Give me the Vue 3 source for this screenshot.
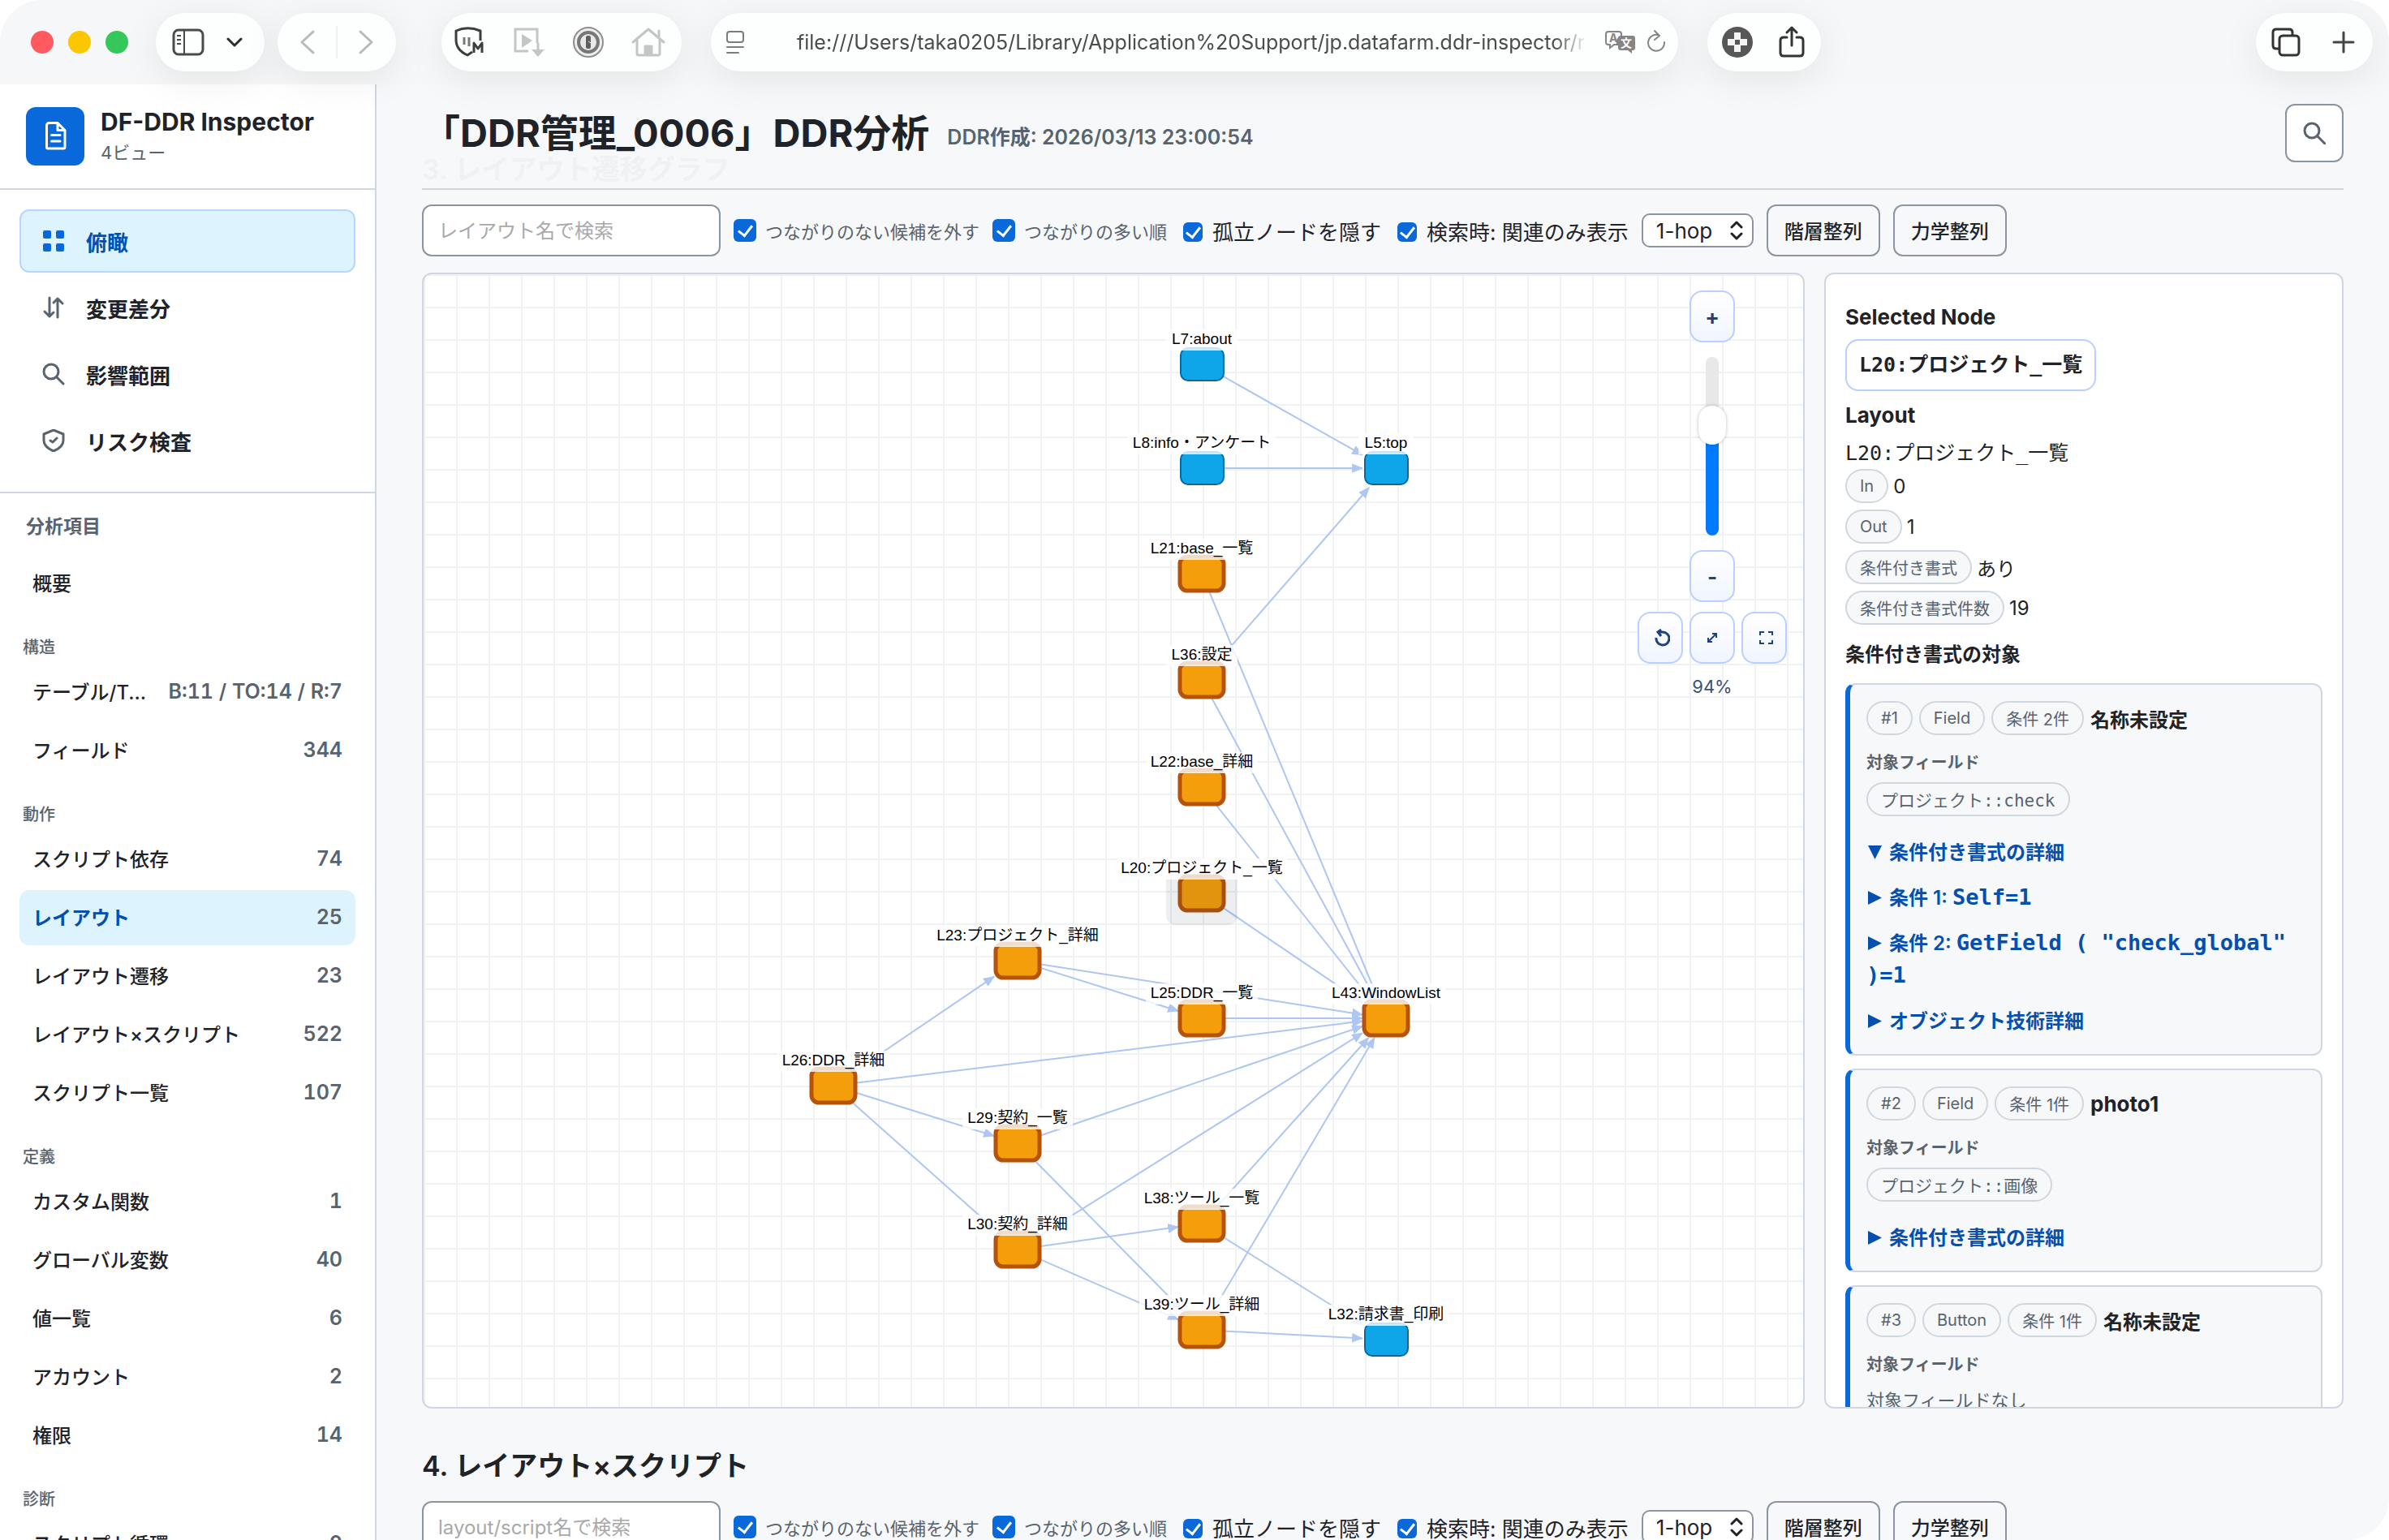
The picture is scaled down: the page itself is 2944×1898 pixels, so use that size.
<script setup>
import { ref } from "vue";

const url = ref(
  "file:///Users/taka0205/Library/Application%20Support/jp.datafarm.ddr-inspector/r"
);
const zoom = ref(65);

const views = [
  { label: "俯瞰", icon: "grid", active: true },
  { label: "変更差分", icon: "diff" },
  { label: "影響範囲", icon: "search" },
  { label: "リスク検査", icon: "shield" },
];

const groups = [
  { title: "", items: [{ label: "概要", count: "" }] },
  {
    title: "構造",
    items: [
      { label: "テーブル/T...", count: "B:11 / TO:14 / R:7" },
      { label: "フィールド", count: "344" },
    ],
  },
  {
    title: "動作",
    items: [
      { label: "スクリプト依存", count: "74" },
      { label: "レイアウト", count: "25", active: true },
      { label: "レイアウト遷移", count: "23" },
      { label: "レイアウト×スクリプト", count: "522" },
      { label: "スクリプト一覧", count: "107" },
    ],
  },
  {
    title: "定義",
    items: [
      { label: "カスタム関数", count: "1" },
      { label: "グローバル変数", count: "40" },
      { label: "値一覧", count: "6" },
      { label: "アカウント", count: "2" },
      { label: "権限", count: "14" },
    ],
  },
  { title: "診断", items: [{ label: "スクリプト循環", count: "0" }] },
];

const filters = [
  { label: "つながりのない候補を外す", muted: true },
  { label: "つながりの多い順", muted: true },
  { label: "孤立ノードを隠す" },
  { label: "検索時: 関連のみ表示" },
];

// node centres on the graph canvas
const nodes = [
  { id: "L7", name: "about", x: 959, y: 111, plain: true, lw: 74 },
  { id: "L8", name: "info・アンケート", x: 959, y: 239, plain: true, lw: 168 },
  { id: "L5", name: "top", x: 1186, y: 239, plain: true, lw: 54 },
  { id: "L21", name: "base_一覧", x: 959, y: 369, lw: 124 },
  { id: "L36", name: "設定", x: 959, y: 500, lw: 74 },
  { id: "L22", name: "base_詳細", x: 959, y: 632, lw: 124 },
  { id: "L20", name: "プロジェクト_一覧", x: 959, y: 763, lw: 196, selected: true },
  { id: "L23", name: "プロジェクト_詳細", x: 732, y: 846, lw: 196 },
  { id: "L25", name: "DDR_一覧", x: 959, y: 917, lw: 124 },
  { id: "L43", name: "WindowList", x: 1186, y: 917, lw: 134 },
  { id: "L26", name: "DDR_詳細", x: 505, y: 1000, lw: 124 },
  { id: "L29", name: "契約_一覧", x: 732, y: 1071, lw: 122 },
  { id: "L30", name: "契約_詳細", x: 732, y: 1202, lw: 122 },
  { id: "L38", name: "ツール_一覧", x: 959, y: 1170, lw: 140 },
  { id: "L39", name: "ツール_詳細", x: 959, y: 1301, lw: 140 },
  { id: "L32", name: "請求書_印刷", x: 1186, y: 1313, plain: true, lw: 140 },
];

const links = [
  ["L7", "L5"],
  ["L8", "L5"],
  ["L36", "L5"],
  ["L21", "L43"],
  ["L36", "L43"],
  ["L22", "L43"],
  ["L20", "L43"],
  ["L23", "L25"],
  ["L23", "L43"],
  ["L25", "L43"],
  ["L26", "L23"],
  ["L26", "L43"],
  ["L26", "L29"],
  ["L26", "L30"],
  ["L29", "L43"],
  ["L29", "L39"],
  ["L30", "L43"],
  ["L30", "L38"],
  ["L30", "L39"],
  ["L38", "L43"],
  ["L38", "L32"],
  ["L39", "L43"],
  ["L39", "L32"],
];

// cut each line where it meets the target's box, so the arrow head stays visible
const edges = links.map(([from, to]) => {
  const a = nodes.find((n) => n.id === from);
  const b = nodes.find((n) => n.id === to);
  const dx = b.x - a.x;
  const dy = b.y - a.y;
  const t = Math.min(29 / Math.abs(dx), 24 / Math.abs(dy || 1));
  return {
    key: from + to,
    x1: a.x,
    y1: a.y,
    x2: b.x - dx * t,
    y2: b.y - dy * t,
  };
});
</script>

<template>
  <div class="window">
    <header class="browser-bar">
      <div class="lights">
        <span class="light red"></span>
        <span class="light yellow"></span>
        <span class="light green"></span>
      </div>
      <div class="pill sidebar-pill">
        <button type="button" aria-label="Sidebar">
          <svg width="40" height="34" fill="none" stroke="#4a4a4a" stroke-width="3">
            <rect x="2" y="2" width="36" height="30" rx="6" />
            <path d="M15 2v30M6 9h5M6 14h5M6 19h5" stroke-width="2" />
          </svg>
        </button>
        <button type="button" aria-label="Tab groups">
          <svg width="20" height="12" fill="none" stroke="#2b2b2b" stroke-width="3" stroke-linecap="round" stroke-linejoin="round">
            <path d="M2 2l8 8 8-8" />
          </svg>
        </button>
      </div>
      <div class="pill history-pill">
        <button type="button" aria-label="Back">
          <svg width="20" height="32" fill="none" stroke="#b8b9ba" stroke-width="3" stroke-linecap="round" stroke-linejoin="round">
            <path d="M17 3L3 16l14 13" />
          </svg>
        </button>
        <span class="pill-divider"></span>
        <button type="button" aria-label="Forward">
          <svg width="20" height="32" fill="none" stroke="#b8b9ba" stroke-width="3" stroke-linecap="round" stroke-linejoin="round">
            <path d="M3 3l14 13L3 29" />
          </svg>
        </button>
      </div>
      <div class="pill tools-pill">
        <button type="button" aria-label="Content blocker">
          <svg width="40" height="38" fill="none" stroke="#3d3d3d" stroke-width="3" stroke-linejoin="round">
            <path d="M33 17V5C23 1 12 1 3 5v11c0 9 5 15 14 19l6-4" />
            <path d="M13 13v9M19 13v11" stroke="#777" />
            <path d="M25 32V20l5 7 5-7v12" />
          </svg>
        </button>
        <button type="button" aria-label="Video download">
          <svg width="40" height="38" fill="none" stroke="#c3c5c6" stroke-width="3">
            <path d="M19 30H3V3h27v17" />
            <path d="M11 9l13 8-13 9z" fill="#c3c5c6" stroke="none" />
            <path d="M31 20v10" />
            <path d="M23 28h16l-8 9z" fill="#c3c5c6" stroke="none" />
          </svg>
        </button>
        <button type="button" aria-label="Password manager">
          <svg width="40" height="40">
            <circle cx="20" cy="20" r="18" fill="#eee" stroke="#8e8e8e" stroke-width="2" />
            <circle cx="20" cy="20" r="12" fill="#e8e8e8" stroke="#777" stroke-width="4" />
            <rect x="17" y="12" width="6" height="16" rx="2" fill="#5f5f5f" />
            <path d="M20 19l3 2" stroke="#e8e8e8" />
          </svg>
        </button>
        <button type="button" aria-label="Home">
          <svg width="42" height="38" fill="none" stroke="#c3c5c6" stroke-width="3" stroke-linecap="round" stroke-linejoin="round">
            <path d="M2 19L21 3l19 16M7 16v17q0 2 2 2h24q2 0 2-2V16M34 12V5" />
            <path d="M17 34V24h8v10z" fill="#c3c5c6" />
          </svg>
        </button>
      </div>
      <div class="pill url-pill">
        <svg width="24" height="30" fill="none" stroke="#7c7c7c" stroke-width="2" stroke-linecap="round">
          <rect x="2" y="2" width="20" height="13" rx="3" />
          <path d="M2 21h20M2 28h14" />
        </svg>
        <input v-model="url" class="url-input" aria-label="URL" spellcheck="false" />
        <button type="button" aria-label="Translate">
          <svg width="40" height="30">
            <path d="M5 2h13q3 0 3 3v4q-5 1-5 5v4h-4l-5 4v-4H5q-3 0-3-3V5q0-3 3-3z" fill="none" stroke="#858585" stroke-width="2" />
            <text x="6" y="15" class="glyph" fill="#858585">A</text>
            <path d="M20 7h15q3 0 3 3v12q0 3-3 3h-1v4l-5-4h-9q-3 0-3-3V10q0-3 3-3z" fill="#858585" />
            <text x="20" y="21" class="glyph" fill="#fff">文</text>
          </svg>
        </button>
        <button type="button" aria-label="Reload">
          <svg width="26" height="32" fill="none" stroke="#858585" stroke-width="2" stroke-linecap="round" stroke-linejoin="round">
            <path d="M23 16a10 10 0 1 1-8-9M11 2l6 6-6 5" />
          </svg>
        </button>
      </div>
      <div class="pill share-pill">
        <button type="button" aria-label="Extension">
          <svg width="38" height="38">
            <circle cx="19" cy="19" r="19" fill="#575757" />
            <path d="M15 7h8v8h8v8h-8v8h-8v-8H7v-8h8z" fill="#f4f4f4" />
            <rect x="16" y="16" width="6" height="6" fill="#575757" />
          </svg>
        </button>
        <button type="button" aria-label="Share">
          <svg width="32" height="40" fill="none" stroke="#333" stroke-width="3" stroke-linecap="round" stroke-linejoin="round">
            <path d="M10 14H6q-4 0-4 4v15q0 4 4 4h20q4 0 4-4V18q0-4-4-4h-4M16 24V3M10 8l6-6 6 6" />
          </svg>
        </button>
      </div>
      <div class="pill tabs-pill">
        <button type="button" aria-label="Tab overview">
          <svg width="36" height="36" fill="none" stroke="#333" stroke-width="3">
            <path d="M9 26H6q-4 0-4-4V6q0-4 4-4h16q4 0 4 4v3" />
            <rect x="10" y="10" width="24" height="24" rx="4" />
          </svg>
        </button>
        <button type="button" aria-label="New tab">
          <svg width="28" height="28" stroke="#444" stroke-width="3" stroke-linecap="round">
            <path d="M14 2v24M2 14h24" />
          </svg>
        </button>
      </div>
    </header>

    <div class="page">
      <aside class="sidebar">
        <div class="brand">
          <div class="brand-logo">
            <svg width="36" height="36" viewBox="0 0 24 24" fill="none" stroke="#fff" stroke-width="2" stroke-linecap="round" stroke-linejoin="round">
              <path d="M14 1H7a2 2 0 0 0-2 2v18a1 1 0 0 0 1 1h13a1 1 0 0 0 1-1V7zM14 1v6h6M9 11h7M9 16h7" />
            </svg>
          </div>
          <div>
            <div class="brand-name">DF-DDR Inspector</div>
            <div class="brand-sub">4ビュー</div>
          </div>
        </div>

        <nav class="views">
          <a
            v-for="view in views"
            :key="view.label"
            href="#"
            class="view"
            :class="{ active: view.active }"
          >
            <svg v-if="view.icon === 'grid'" class="view-icon" viewBox="0 0 28 28" fill="currentColor">
              <rect x="1" y="1" width="10" height="10" rx="2" />
              <rect x="17" y="1" width="10" height="10" rx="2" />
              <rect x="1" y="17" width="10" height="10" rx="2" />
              <rect x="17" y="17" width="10" height="10" rx="2" />
            </svg>
            <svg v-else-if="view.icon === 'diff'" class="view-icon" viewBox="0 0 28 28">
              <path d="M9 2v23M3 19l6 6 5-5M19 26V3M14 8l5-5 6 6" />
            </svg>
            <svg v-else-if="view.icon === 'search'" class="view-icon" viewBox="0 0 28 28">
              <circle cx="11" cy="11" r="9" />
              <path d="M18 18l8 8" />
            </svg>
            <svg v-else class="view-icon" viewBox="0 0 28 28">
              <path d="M14 1l12 5v8c0 6-5 10-12 13C7 24 2 20 2 14V6zM10 14l3 2 5-5" />
            </svg>
            {{ view.label }}
          </a>
        </nav>

        <div class="section-title">分析項目</div>
        <nav v-for="group in groups" :key="group.title" class="group">
          <div v-if="group.title" class="group-title">{{ group.title }}</div>
          <a
            v-for="item in group.items"
            :key="item.label"
            href="#"
            class="item"
            :class="{ active: item.active }"
          >
            <span class="item-label">{{ item.label }}</span>
            <span class="item-count">{{ item.count }}</span>
          </a>
        </nav>
      </aside>

      <main class="content">
        <div class="page-header">
          <h1>「DDR管理_0006」DDR分析</h1>
          <span class="created">DDR作成: 2026/03/13 23:00:54</span>
          <button type="button" class="search-btn" aria-label="検索">
            <svg class="view-icon" viewBox="0 0 28 28">
              <circle cx="11" cy="11" r="9" />
              <path d="M18 18l9 9" />
            </svg>
          </button>
        </div>

        <section>
          <h2>3. レイアウト遷移グラフ</h2>
          <div class="filters">
            <input class="search" type="text" placeholder="レイアウト名で検索" aria-label="レイアウト名で検索" />
            <label v-for="f in filters" :key="f.label" class="check" :class="{ muted: f.muted }">
              <input type="checkbox" checked />
              {{ f.label }}
            </label>
            <span class="hop">
              <select aria-label="hop">
                <option>1-hop</option>
                <option>2-hop</option>
              </select>
              <svg width="18" height="24"><path d="M3 8l6-6 6 6M3 16l6 6 6-6" /></svg>
            </span>
            <button type="button" class="tool-btn">階層整列</button>
            <button type="button" class="tool-btn">力学整列</button>
          </div>

          <div class="graph-row">
            <div class="canvas">
              <svg class="graph">
                <defs>
                  <marker id="arrow" viewBox="0 0 12 12" refX="11" refY="6" markerWidth="14" markerHeight="14" markerUnits="userSpaceOnUse" orient="auto">
                    <path d="M0 1l12 5-12 5z" fill="#aec6f1" />
                  </marker>
                </defs>
                <line
                  v-for="e in edges"
                  :key="e.key"
                  class="edge"
                  :x1="e.x1"
                  :y1="e.y1"
                  :x2="e.x2"
                  :y2="e.y2"
                  marker-end="url(#arrow)"
                />
                <g v-for="n in nodes" :key="n.id">
                  <rect v-if="n.plain" class="node plain" :x="n.x - 26" :y="n.y - 20" width="53" height="40" rx="9" />
                  <rect v-else class="node" :x="n.x - 27" :y="n.y - 21" width="54" height="42" rx="9" />
                  <rect v-if="n.selected" class="halo" :x="n.x - 44" :y="n.y - 40" width="88" height="79" rx="12" />
                  <rect class="label-bg" :x="n.x - n.lw / 2 - 7" :y="n.y - 43" :width="n.lw + 14" height="26" />
                  <text class="node-label" :x="n.x" :y="n.y - 25">{{ n.id }}:{{ n.name }}</text>
                </g>
              </svg>

              <div class="zoom">
                <button type="button">+</button>
                <input v-model="zoom" type="range" min="0" max="100" aria-label="Zoom" />
                <button type="button">-</button>
                <div class="zoom-row">
                  <button type="button" aria-label="Reset">
                    <svg class="reset-icon" width="24" height="22"><path d="M7 11a8 8 0 1 0 8-7H9M13 1L9 4l4 5" /></svg>
                  </button>
                  <button type="button" aria-label="Fit">
                    <svg class="thin-icon" width="12" height="12"><path d="M1 11L11 1M6 1h5v5M1 6v5h5" /></svg>
                  </button>
                  <button type="button" aria-label="Full screen">
                    <svg class="thin-icon" width="24" height="18"><path d="M7 6V2h5M17 2h5v4M22 12v4h-5M12 16H7v-4" /></svg>
                  </button>
                </div>
                <span class="zoom-value">94%</span>
              </div>
            </div>

            <aside class="detail">
              <h3>Selected Node</h3>
              <div class="selected-name">L20:プロジェクト_一覧</div>
              <h3>Layout</h3>
              <div class="layout-name">L20:プロジェクト_一覧</div>
              <div class="fact"><span class="tag">In</span>0</div>
              <div class="fact"><span class="tag">Out</span>1</div>
              <div class="fact"><span class="tag">条件付き書式</span>あり</div>
              <div class="fact"><span class="tag">条件付き書式件数</span>19</div>
              <h3 class="targets-title">条件付き書式の対象</h3>

              <div class="card">
                <div class="card-head">
                  <span class="tag">#1</span><span class="tag">Field</span><span class="tag">条件 2件</span>
                  <strong>名称未設定</strong>
                </div>
                <div class="card-label">対象フィールド</div>
                <span class="tag mono">プロジェクト::check</span>
                <details open>
                  <summary>条件付き書式の詳細</summary>
                  <details><summary>条件 1: <code>Self=1</code></summary></details>
                  <details>
                    <summary>条件 2: <code>GetField ( "check_global" )=1</code></summary>
                  </details>
                  <details><summary>オブジェクト技術詳細</summary></details>
                </details>
              </div>

              <div class="card">
                <div class="card-head">
                  <span class="tag">#2</span><span class="tag">Field</span><span class="tag">条件 1件</span>
                  <strong class="latin">photo1</strong>
                </div>
                <div class="card-label">対象フィールド</div>
                <span class="tag mono">プロジェクト::画像</span>
                <details><summary>条件付き書式の詳細</summary></details>
              </div>

              <div class="card">
                <div class="card-head">
                  <span class="tag">#3</span><span class="tag">Button</span><span class="tag">条件 1件</span>
                  <strong>名称未設定</strong>
                </div>
                <div class="card-label">対象フィールド</div>
                <div class="card-empty">対象フィールドなし</div>
              </div>
            </aside>
          </div>
        </section>

        <section>
          <h2>4. レイアウト×スクリプト</h2>
          <div class="filters">
            <input class="search" type="text" placeholder="layout/script名で検索" aria-label="layout/script名で検索" />
            <label v-for="f in filters" :key="f.label" class="check" :class="{ muted: f.muted }">
              <input type="checkbox" checked />
              {{ f.label }}
            </label>
            <span class="hop">
              <select aria-label="hop">
                <option>1-hop</option>
                <option>2-hop</option>
              </select>
              <svg width="18" height="24"><path d="M3 8l6-6 6 6M3 16l6 6 6-6" /></svg>
            </span>
            <button type="button" class="tool-btn">階層整列</button>
            <button type="button" class="tool-btn">力学整列</button>
          </div>
        </section>
      </main>
    </div>
  </div>
</template>

<style>
body {
  background: #fff;
}
</style>

<style scoped>
.window {
  height: 100vh;
  display: flex;
  flex-direction: column;
  overflow: hidden;
  border-radius: 52px;
  background: #f6f8fa;
  color: #1f2328;
  font-family: Inter, "Noto Sans CJK JP", sans-serif;
  font-size: 24px;
}
.window * {
  box-sizing: border-box;
}
button,
input,
select {
  font-family: inherit;
}
button {
  cursor: pointer;
}
a {
  color: inherit;
  text-decoration: none;
}

/* browser toolbar */
.browser-bar {
  position: relative;
  z-index: 3;
  flex: none;
  display: flex;
  align-items: center;
  height: 104px;
  padding: 0 20px 0 38px;
  background: #f6f7f9;
}
.browser-bar button {
  display: flex;
  padding: 0;
  border: 0;
  background: none;
}
.lights {
  display: flex;
  gap: 18px;
  margin-right: 34px;
}
.light {
  width: 28px;
  height: 28px;
  border-radius: 50%;
}
.red {
  background: #ff5a5f;
}
.yellow {
  background: #fbc700;
}
.green {
  background: #34c759;
}
.pill {
  display: flex;
  align-items: center;
  justify-content: space-between;
  height: 72px;
  border-radius: 36px;
  background: #fdfefe;
  box-shadow: 0 10px 48px rgba(0, 0, 0, 0.08);
}
.sidebar-pill {
  width: 134px;
  margin-right: 16px;
  padding: 0 27px 0 20px;
}
.history-pill {
  width: 146px;
  margin-right: 56px;
  padding: 0 27px;
}
.pill-divider {
  width: 2px;
  height: 40px;
  background: #eff0f1;
}
.tools-pill {
  width: 296px;
  margin-right: 36px;
  padding: 0 20px 0 15px;
}
.url-pill {
  flex: 0 1 1192px;
  margin-right: 36px;
  padding: 0 14px 0 18px;
}
.url-input {
  flex: 1;
  min-width: 0;
  margin: 0 10px 0 64px;
  padding: 0;
  border: 0;
  outline: 0;
  background: none;
  color: #4c4c4c;
  font-size: 25px;
  mask-image: linear-gradient(to left, transparent, #000 40px);
}
.url-pill button {
  margin-left: 11px;
}
.glyph {
  font-size: 14px;
  font-weight: 700;
}
.share-pill {
  width: 140px;
  padding: 0 20px 0 18px;
}
.tabs-pill {
  width: 144px;
  margin-left: auto;
  padding: 0 22px 0 19px;
}

.page {
  flex: 1;
  min-height: 0;
  display: flex;
}

/* sidebar */
.sidebar {
  flex: none;
  width: 464px;
  overflow: hidden;
  border-right: 2px solid #d0d7de;
  background: #fff;
}
.brand {
  display: flex;
  align-items: center;
  gap: 20px;
  height: 130px;
  padding: 0 32px;
  border-bottom: 2px solid #d0d7de;
}
.brand-logo {
  display: flex;
  align-items: center;
  justify-content: center;
  width: 72px;
  height: 72px;
  border-radius: 12px;
  background: #0969da;
}
.brand-name {
  font-size: 30px;
  line-height: 40px;
  font-weight: 700;
}
.brand-sub {
  color: #59636e;
  font-size: 22px;
  line-height: 36px;
}
.views {
  display: flex;
  flex-direction: column;
  gap: 4px;
  padding: 24px;
  border-bottom: 2px solid #d0d7de;
}
.view {
  display: flex;
  align-items: center;
  gap: 26px;
  height: 78px;
  padding: 0 26px;
  border: 2px solid transparent;
  border-radius: 12px;
  font-size: 26px;
  font-weight: 600;
}
.view.active {
  border-color: #b6d7ff;
  background: #ddf4ff;
  color: #0550ae;
}
.view-icon {
  width: 28px;
  height: 28px;
  fill: none;
  stroke: #59636e;
  stroke-width: 3;
  stroke-linecap: round;
  stroke-linejoin: round;
}
.view.active .view-icon {
  fill: #0969da;
  stroke: none;
}
.section-title {
  padding: 26px 32px 21px;
  color: #59636e;
  font-size: 23px;
  line-height: 30px;
  font-weight: 600;
}
.group {
  display: flex;
  flex-direction: column;
  gap: 4px;
  padding: 0 24px;
}
.group-title {
  padding: 30px 4px 2px;
  color: #59636e;
  font-size: 20px;
  line-height: 30px;
  font-weight: 500;
}
.item {
  display: flex;
  align-items: center;
  justify-content: space-between;
  gap: 20px;
  height: 68px;
  padding: 0 16px 3px;
  border-radius: 12px;
  font-weight: 500;
}
.item.active {
  background: #ddf4ff;
}
.item.active .item-label {
  color: #0550ae;
  font-weight: 600;
}
.item-label {
  overflow: hidden;
  white-space: nowrap;
  text-overflow: ellipsis;
}
.item-count {
  flex: none;
  color: #59636e;
  font-size: 25px;
  font-weight: 600;
  font-variant-numeric: tabular-nums;
}

/* main column; the page header floats over the scrolled sections */
.content {
  position: relative;
  flex: 1;
  min-width: 0;
  overflow: hidden;
  padding: 83px 56px 0;
}
.page-header {
  position: absolute;
  top: 0;
  left: 56px;
  right: 56px;
  z-index: 2;
  display: flex;
  align-items: center;
  height: 130px;
  padding-bottom: 8px;
  border-bottom: 2px solid #d0d7de;
  background: rgba(246, 248, 250, 0.97);
}
h1 {
  margin: 0 22px 0 0;
  font-size: 47px;
  line-height: 60px;
  font-weight: 700;
}
.created {
  margin-top: 6px;
  color: #59636e;
  font-size: 25px;
  font-weight: 600;
}
.search-btn {
  display: flex;
  align-items: center;
  justify-content: center;
  width: 72px;
  height: 72px;
  margin-left: auto;
  border: 2px solid #8c959f;
  border-radius: 12px;
  background: #fff;
}
h2 {
  margin: 0 0 21px;
  font-size: 34px;
  line-height: 44px;
  font-weight: 600;
}
.filters {
  display: flex;
  align-items: center;
  gap: 16px;
}
.search {
  width: 368px;
  height: 64px;
  padding: 0 18px;
  border: 2px solid #8c959f;
  border-radius: 12px;
  background: #fff;
  color: #1f2328;
  font-size: 24px;
}
.search::placeholder {
  color: #a9a9a9;
}
.check {
  display: flex;
  align-items: center;
  gap: 12px;
  margin-left: 4px;
  font-size: 26px;
  white-space: nowrap;
}
.check.muted {
  gap: 11px;
  margin-left: 0;
  color: #59636e;
  font-size: 22px;
}
.check input {
  appearance: none;
  width: 24px;
  height: 24px;
  margin: 4px 0 0;
  border-radius: 6px;
  background: #0969da;
  display: grid;
  place-items: center;
}
.check.muted input {
  width: 28px;
  height: 28px;
  margin: 0;
}
.check input::before {
  content: "";
  width: 8px;
  height: 14px;
  margin-bottom: 4px;
  border: solid #fff;
  border-width: 0 3px 3px 0;
  transform: rotate(38deg);
}
.hop {
  position: relative;
  display: flex;
}
.hop select {
  appearance: none;
  width: 138px;
  height: 42px;
  padding: 0 16px;
  border: 2px solid #8c959f;
  border-radius: 10px;
  background: #fff;
  color: #1f2328;
  font-size: 26px;
}
.hop svg {
  position: absolute;
  top: 9px;
  right: 12px;
  fill: none;
  stroke: #1f2328;
  stroke-width: 3;
  stroke-linecap: round;
  stroke-linejoin: round;
  pointer-events: none;
}
.tool-btn {
  width: 140px;
  height: 64px;
  padding: 0 0 2px;
  border: 2px solid #8c959f;
  border-radius: 12px;
  background: #f6f8fa;
  color: #1f2328;
  font-size: 24px;
  font-weight: 500;
}

.graph-row {
  display: grid;
  grid-template-columns: 1fr 640px;
  gap: 24px;
  height: 1400px;
  margin: 20px 0 49px;
}
.canvas {
  position: relative;
  overflow: hidden;
  border: 2px solid #d0d7de;
  border-radius: 12px;
  background-color: #fff;
  background-image: linear-gradient(#eff1f3 2px, transparent 2px),
    linear-gradient(90deg, #eff1f3 2px, transparent 2px);
  background-size: 40px 40px;
}
.graph {
  display: block;
  width: 100%;
  height: 100%;
}
.edge {
  stroke: #aec6f1;
  stroke-width: 2;
}
.node {
  fill: #f59e0b;
  stroke: #b45309;
  stroke-width: 5;
}
.node.plain {
  fill: #0ea5e9;
  stroke: #0369a1;
  stroke-width: 2;
}
.halo {
  fill: #1f2937;
  opacity: 0.08;
}
.label-bg {
  fill: #fff;
  opacity: 0.8;
}
.node-label {
  fill: #000;
  font-family: "Liberation Sans", "Noto Sans CJK JP", sans-serif;
  font-size: 19px;
  text-anchor: middle;
}

.zoom {
  position: absolute;
  top: 20px;
  right: 20px;
  display: flex;
  flex-direction: column;
  align-items: center;
}
.zoom button {
  display: flex;
  align-items: center;
  justify-content: center;
  width: 56px;
  height: 64px;
  padding: 0;
  border: 2px solid #bacfff;
  border-radius: 16px;
  background: linear-gradient(#fff, #f0f5ff);
  color: #1e427f;
  font-size: 26px;
  font-weight: 700;
}
.zoom svg {
  fill: none;
  stroke: #1e427f;
}
.zoom .reset-icon {
  stroke-width: 3;
}
.zoom .thin-icon {
  stroke-width: 2;
}
.zoom input {
  appearance: none;
  writing-mode: vertical-lr;
  direction: rtl;
  width: 34px;
  height: 220px;
  margin: 18px 0;
  background: none;
}
.zoom input::-webkit-slider-runnable-track {
  width: 16px;
  height: 220px;
  border-radius: 8px;
  background: linear-gradient(to top, #007aff 60%, #e8e8e8 60%);
}
.zoom input::-webkit-slider-thumb {
  appearance: none;
  width: 34px;
  height: 48px;
  margin-left: -9px;
  border-radius: 17px;
  background: #fff;
  box-shadow: 0 0 4px rgba(0, 0, 0, 0.25);
}
.zoom-row {
  display: flex;
  gap: 8px;
  margin: 12px 0;
}
.zoom-value {
  color: #3b5278;
  font-size: 22px;
  line-height: 32px;
}

/* detail panel */
.detail {
  overflow: hidden;
  padding: 33px 24px 0;
  border: 2px solid #d0d7de;
  border-radius: 12px;
  background: #fff;
}
h3 {
  margin: 0;
  font-size: 26px;
  line-height: 40px;
  font-weight: 700;
}
.selected-name {
  width: fit-content;
  height: 64px;
  margin: 7px 0 10px;
  padding: 0 15px;
  border: 2px solid #bacfff;
  border-radius: 16px;
  line-height: 60px;
  font-weight: 600;
}
.selected-name,
.layout-name,
.mono,
code {
  font-family: "DejaVu Sans Mono", "Noto Sans CJK JP", monospace;
}
.selected-name,
.layout-name {
  font-size: 25px;
}
.layout-name {
  margin-top: 12px;
  line-height: 30px;
}
.fact {
  display: flex;
  align-items: center;
  gap: 6px;
  height: 50px;
}
.tag {
  display: inline-flex;
  align-items: center;
  height: 42px;
  padding: 0 16px;
  border: 2px solid #d0d7de;
  border-radius: 21px;
  background: #f6f8fa;
  color: #59636e;
  font-size: 20px;
}
.targets-title {
  margin: 13px 0 15px;
  font-size: 24px;
  font-weight: 600;
}
.card {
  margin-bottom: 16px;
  padding: 20px;
  border: 2px solid #d0d7de;
  border-left: 6px solid #0969da;
  border-radius: 12px;
  background: #f6f8fa;
}
.card-head {
  display: flex;
  align-items: center;
  gap: 8px;
  height: 42px;
}
.card-head strong {
  font-weight: 600;
}
.card-head .latin {
  font-size: 26px;
  font-weight: 700;
}
.card-label {
  height: 30px;
  margin: 19px 0 9px;
  color: #59636e;
  font-size: 20px;
  line-height: 30px;
  font-weight: 600;
}
.card > .mono {
  display: flex;
  width: fit-content;
  font-size: 21px;
}
.card-empty {
  color: #59636e;
  font-size: 22px;
  line-height: 40px;
}
details {
  margin-top: 16px;
}
.card > details {
  margin-top: 25px;
}
summary {
  list-style: none;
  color: #0550ae;
  line-height: 40px;
  font-weight: 600;
  cursor: pointer;
}
summary::before {
  content: "";
  display: inline-block;
  width: 17px;
  height: 17px;
  margin: 0 9px 0 2px;
  background: #0550ae;
  clip-path: polygon(0 0, 100% 50%, 0 100%);
}
details[open] > summary::before {
  clip-path: polygon(0 0, 100% 0, 50% 100%);
}
code {
  font-size: 27px;
  line-height: 1;
}
</style>
